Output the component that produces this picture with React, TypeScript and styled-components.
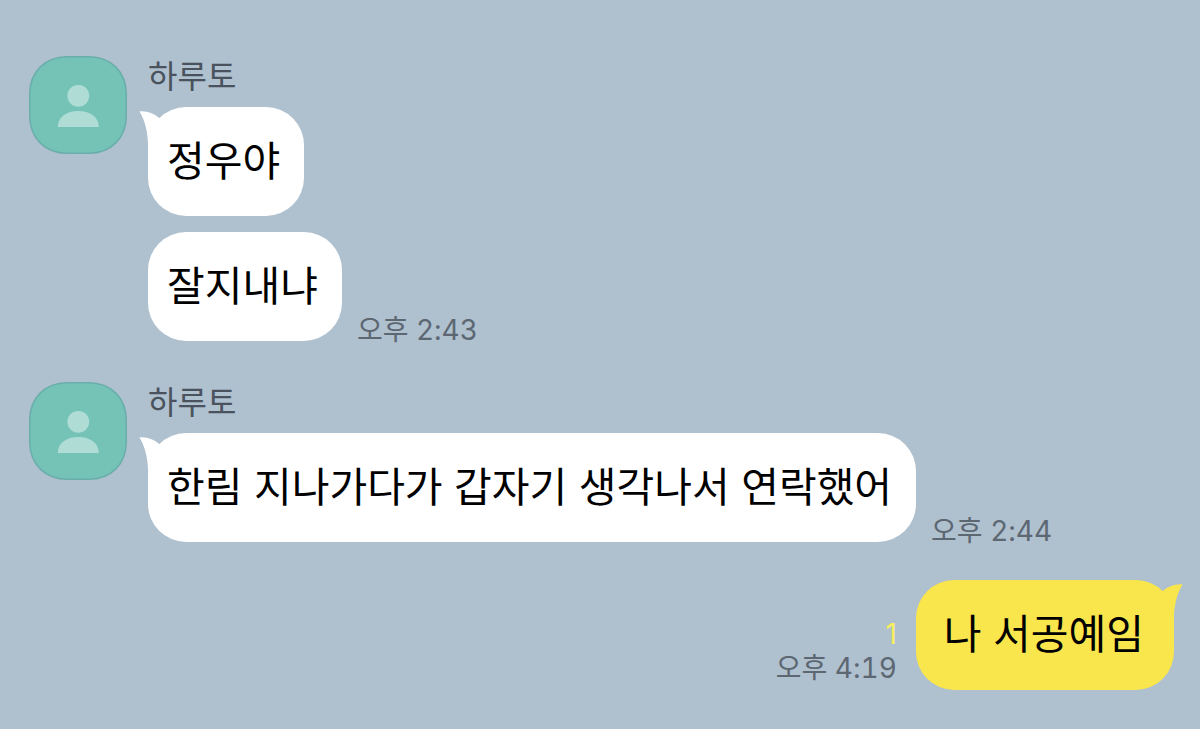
import React from "react";
import styled, { createGlobalStyle } from "styled-components";

const GlobalStyle = createGlobalStyle`
  *, *::before, *::after { box-sizing: border-box; }
  html { background: #afc0cf; }
  body {
    margin: 0;
    font-family: Inter, "Noto Sans CJK KR", sans-serif;
  }
`;

const Chat = styled.main`
  display: flex;
  flex-direction: column;
  min-height: 100vh;
  padding: 56px 26px 39px 29px;
  background: #afc0cf;
`;

const Group = styled.section`
  display: flex;
  align-items: flex-start;
  gap: 21px;

  & + & {
    margin-top: 41px;
  }
`;

const Avatar = styled.svg`
  flex: none;
  width: 98px;
  height: 98px;
`;

const Thread = styled.div`
  display: flex;
  flex-direction: column;
  gap: 16px;
  min-width: 0;
`;

const Sender = styled.h2`
  margin: 0 0 -7px;
  font-size: 32px;
  line-height: 42px;
  font-weight: 400;
  color: #4a535d;
`;

const Line = styled.div`
  display: flex;
  align-items: flex-end;
  gap: 15px;
`;

const MineLine = styled(Line)`
  justify-content: flex-end;
  gap: 19px;
  margin-top: 38px;
`;

const Bubble = styled.p<{ $mine?: boolean }>`
  position: relative;
  margin: 0;
  padding: ${(p) => (p.$mine ? "24px 30px 26px 28px" : "24px 24px 25px 19px")};
  border-radius: 38px;
  background: ${(p) => (p.$mine ? "#f9e54c" : "#ffffff")};
  color: #000;
  font-size: 41px;
  line-height: 60px;
`;

const Tail = styled.svg<{ $mine?: boolean }>`
  position: absolute;
  top: 3px;
  ${(p) => (p.$mine ? "right: -9px; transform: scaleX(-1);" : "left: -9px;")}
  width: 26px;
  height: 36px;
`;

const Meta = styled.div<{ $mine?: boolean }>`
  display: flex;
  flex-direction: column;
  align-items: flex-end;
  margin-bottom: ${(p) => (p.$mine ? 5 : -6)}px;
  font-size: 28px;
  line-height: 34px;
  white-space: nowrap;
`;

const Unread = styled.span`
  color: #f8ee60;
`;

const Time = styled.time`
  color: #5c6772;
  font-variant-numeric: tabular-nums;
`;

const Person = () => (
  <Avatar viewBox="0 0 98 98" role="img" aria-label="하루토">
    <path
      d="M38 .75H60C82 .75 97.25 16 97.25 38V60C97.25 82 82 97.25 60 97.25H38C16 97.25 .75 82 .75 60V38C.75 16 16 .75 38 .75Z"
      fill="#75c2b7"
      stroke="#69aeab"
      strokeWidth="1.5"
    />
    <circle cx="49.3" cy="39.8" r="10.9" fill="#afddd6" />
    <path d="M28.8 71C28.8 61 37.5 55 49.3 55C61 55 69.8 61 69.8 71Z" fill="#afddd6" />
  </Avatar>
);

const BubbleTail = ({ mine, color }: { mine?: boolean; color: string }) => (
  <Tail $mine={mine} viewBox="0 0 26 36" aria-hidden="true">
    <path d="M.5 1.5C8 .8 14 3 20.3 8L26 18L9 34C8.8 24 6.5 11 .5 1.5Z" fill={color} />
  </Tail>
);

type Message = { text: string; tail?: boolean; time?: string };

const groups: { sender: string; messages: Message[] }[] = [
  {
    sender: "하루토",
    messages: [
      { text: "정우야", tail: true },
      { text: "잘지내냐", time: "오후 2:43" },
    ],
  },
  {
    sender: "하루토",
    messages: [{ text: "한림 지나가다가 갑자기 생각나서 연락했어", tail: true, time: "오후 2:44" }],
  },
];

export default function App() {
  return (
    <>
      <GlobalStyle />
      <Chat>
        {groups.map((group, i) => (
          <Group key={i}>
            <Person />
            <Thread>
              <Sender>{group.sender}</Sender>
              {group.messages.map((m) => (
                <Line key={m.text}>
                  <Bubble>
                    {m.tail && <BubbleTail color="#ffffff" />}
                    {m.text}
                  </Bubble>
                  {m.time && (
                    <Meta>
                      <Time>{m.time}</Time>
                    </Meta>
                  )}
                </Line>
              ))}
            </Thread>
          </Group>
        ))}
        <MineLine>
          <Meta $mine>
            <Unread>1</Unread>
            <Time>오후 4:19</Time>
          </Meta>
          <Bubble $mine>
            <BubbleTail mine color="#f9e54c" />나 서공예임
          </Bubble>
        </MineLine>
      </Chat>
    </>
  );
}
